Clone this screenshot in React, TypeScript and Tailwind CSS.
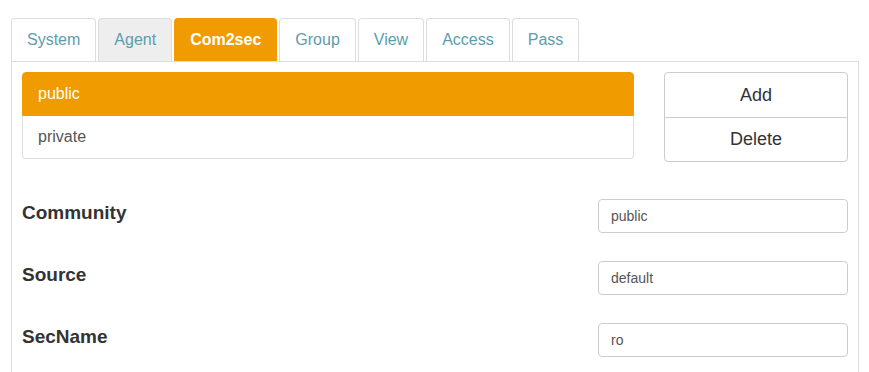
import React from "react";

const tabs = ["System", "Agent", "Com2sec", "Group", "View", "Access", "Pass"];

export default function App() {
  const font = { fontFamily: '"Liberation Sans", Arial, Helvetica, sans-serif' };
  return (
    <div className="bg-white min-h-screen" style={font}>
      <div className="pt-[18px] ml-[11px] w-[848px]">
        <div className="flex gap-[2px] h-[43px]">
          {tabs.map((t) => {
            const active = t === "Com2sec";
            const hover = t === "Agent";
            return (
              <div
                key={t}
                className={
                  "h-[43px] px-[15px] flex items-center text-[16px] rounded-t-[4px] border border-b-0 " +
                  (active
                    ? "bg-[#f09c00] border-[#f09c00] text-white font-bold"
                    : hover
                    ? "bg-[#eeeeee] border-[#dddddd] text-[#5b9dab]"
                    : "bg-white border-[#dddddd] text-[#5b9dab]")
                }
              >
                {t}
              </div>
            );
          })}
        </div>
        <div className="border border-[#dddddd] p-[10px] pb-[40px]">
          <div className="flex justify-between">
            <div className="w-[612px]">
              <div className="h-[44px] flex items-center px-[15px] bg-[#f09c00] border border-[#f09c00] rounded-t-[4px] text-white text-[16px]">
                public
              </div>
              <div className="h-[43px] flex items-center px-[15px] bg-white border border-t-0 border-[#dddddd] rounded-b-[4px] text-[#555555] text-[16px]">
                private
              </div>
            </div>
            <div className="w-[184px] border border-[#cccccc] rounded-[4px] flex flex-col h-[90px]">
              <div className="h-[45px] pt-[1px] flex items-center justify-center text-[18px] text-[#333333] border-b border-[#cccccc]">
                Add
              </div>
              <div className="h-[43px] flex items-center justify-center text-[18px] text-[#333333]">
                Delete
              </div>
            </div>
          </div>
          <div className="mt-[37px] flex flex-col gap-[28px]">
            {[
              ["Community", "public"],
              ["Source", "default"],
              ["SecName", "ro"],
            ].map(([label, value]) => (
              <div key={label} className="flex justify-between items-start">
                <div className="mt-[3px] leading-[22px] text-[19px] font-bold text-[#333333]">
                  {label}
                </div>
                <div className="w-[250px] h-[34px] border border-[#cccccc] rounded-[4px] px-[12px] flex items-center text-[14px] text-[#555555]">
                  {value}
                </div>
              </div>
            ))}
          </div>
        </div>
      </div>
    </div>
  );
}
